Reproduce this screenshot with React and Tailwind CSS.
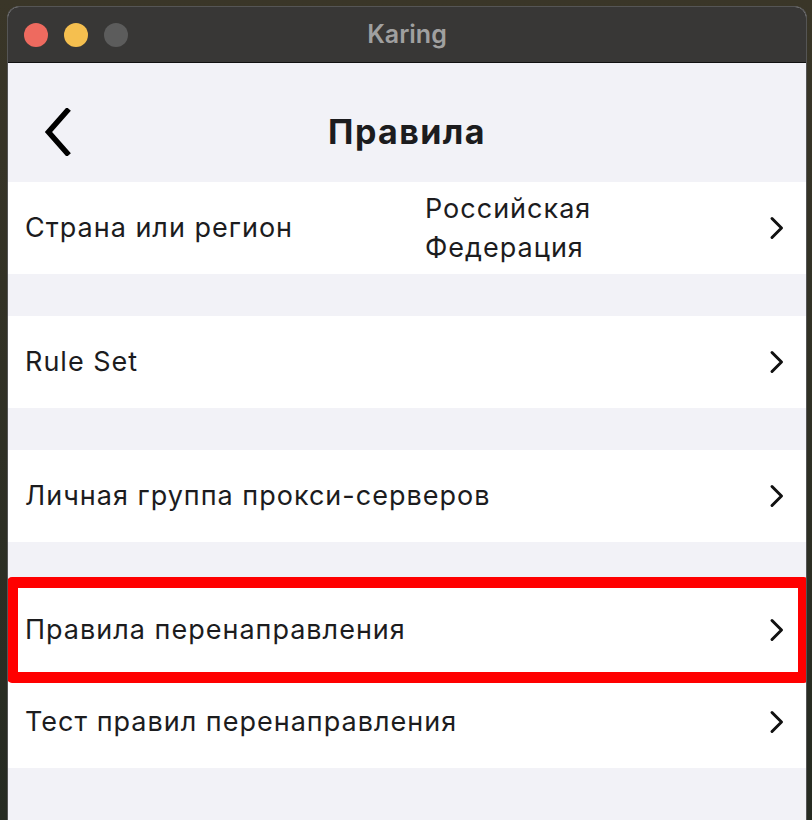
import React from 'react';

const Chevron = () => (
  <svg width="16" height="24" viewBox="0 0 16 24" fill="none" className="shrink-0">
    <path d="M3 2.5 L12.5 12 L3 21.5" stroke="#111" strokeWidth="3" strokeLinecap="round" strokeLinejoin="round" />
  </svg>
);

const Row = ({ label, value, children }) => (
  <div className="relative flex h-[92px] items-center bg-white pl-[17px] pr-[21px]">
    <div className="flex-1 text-[27px] tracking-[1px] text-[#1c1c1e]">{label}</div>
    {value && (
      <div className="w-[344px] text-[27px] leading-[39px] tracking-[1px] text-[#1c1c1e]">
        {value.map((v) => (
          <div key={v}>{v}</div>
        ))}
      </div>
    )}
    <Chevron />
    {children}
  </div>
);

const Gap = () => <div className="h-[42px]" />;

export default function App() {
  return (
    <div
      className="h-[820px] w-[812px] overflow-hidden bg-gradient-to-b from-[#3a3628] to-[#262b22] pt-[6px]"
      style={{ fontFamily: 'Inter, "Noto Sans", sans-serif' }}
    >
      <div className="ml-[7px] flex h-[814px] w-[800px] flex-col overflow-hidden rounded-t-[12px] border-x border-t border-[#555] bg-[#f2f2f7]">
        <div className="relative flex h-[56px] shrink-0 items-center border-b border-[#111] bg-[#383736]">
          <div className="flex gap-[16px] pl-[16px]">
            <span className="h-[24px] w-[24px] rounded-full bg-[#ee6a5f]" />
            <span className="h-[24px] w-[24px] rounded-full bg-[#f5bf4f]" />
            <span className="h-[24px] w-[24px] rounded-full bg-[#5c5c5c]" />
          </div>
          <div className="absolute inset-x-0 top-0 flex h-full items-center justify-center text-[25px] font-semibold text-[#a0a0a0]">
            Karing
          </div>
        </div>

        <div className="relative flex h-[119px] shrink-0 items-center justify-center pt-[18px]">
          <svg className="absolute left-[36px] top-[45px]" width="28" height="48" viewBox="0 0 28 48" fill="none">
            <path d="M23 3 L4.5 24 L23 45" stroke="#000" strokeWidth="5.5" strokeLinecap="square" />
          </svg>
          <div className="text-[34px] font-bold tracking-[1.4px] text-[#1c1c1e]">Правила</div>
        </div>

        <Row label="Страна или регион" value={['Российская', 'Федерация']} />
        <Gap />
        <Row label="Rule Set" />
        <Gap />
        <Row label="Личная группа прокси-серверов" />
        <Gap />
        <Row label="Правила перенаправления">
          <div className="pointer-events-none absolute -bottom-[7px] -left-[1px] -right-[3px] -top-[7px] z-10 rounded-[5px] border-[11px] border-[#ff0000]" />
        </Row>
        <Row label="Тест правил перенаправления" />
      </div>
    </div>
  );
}
